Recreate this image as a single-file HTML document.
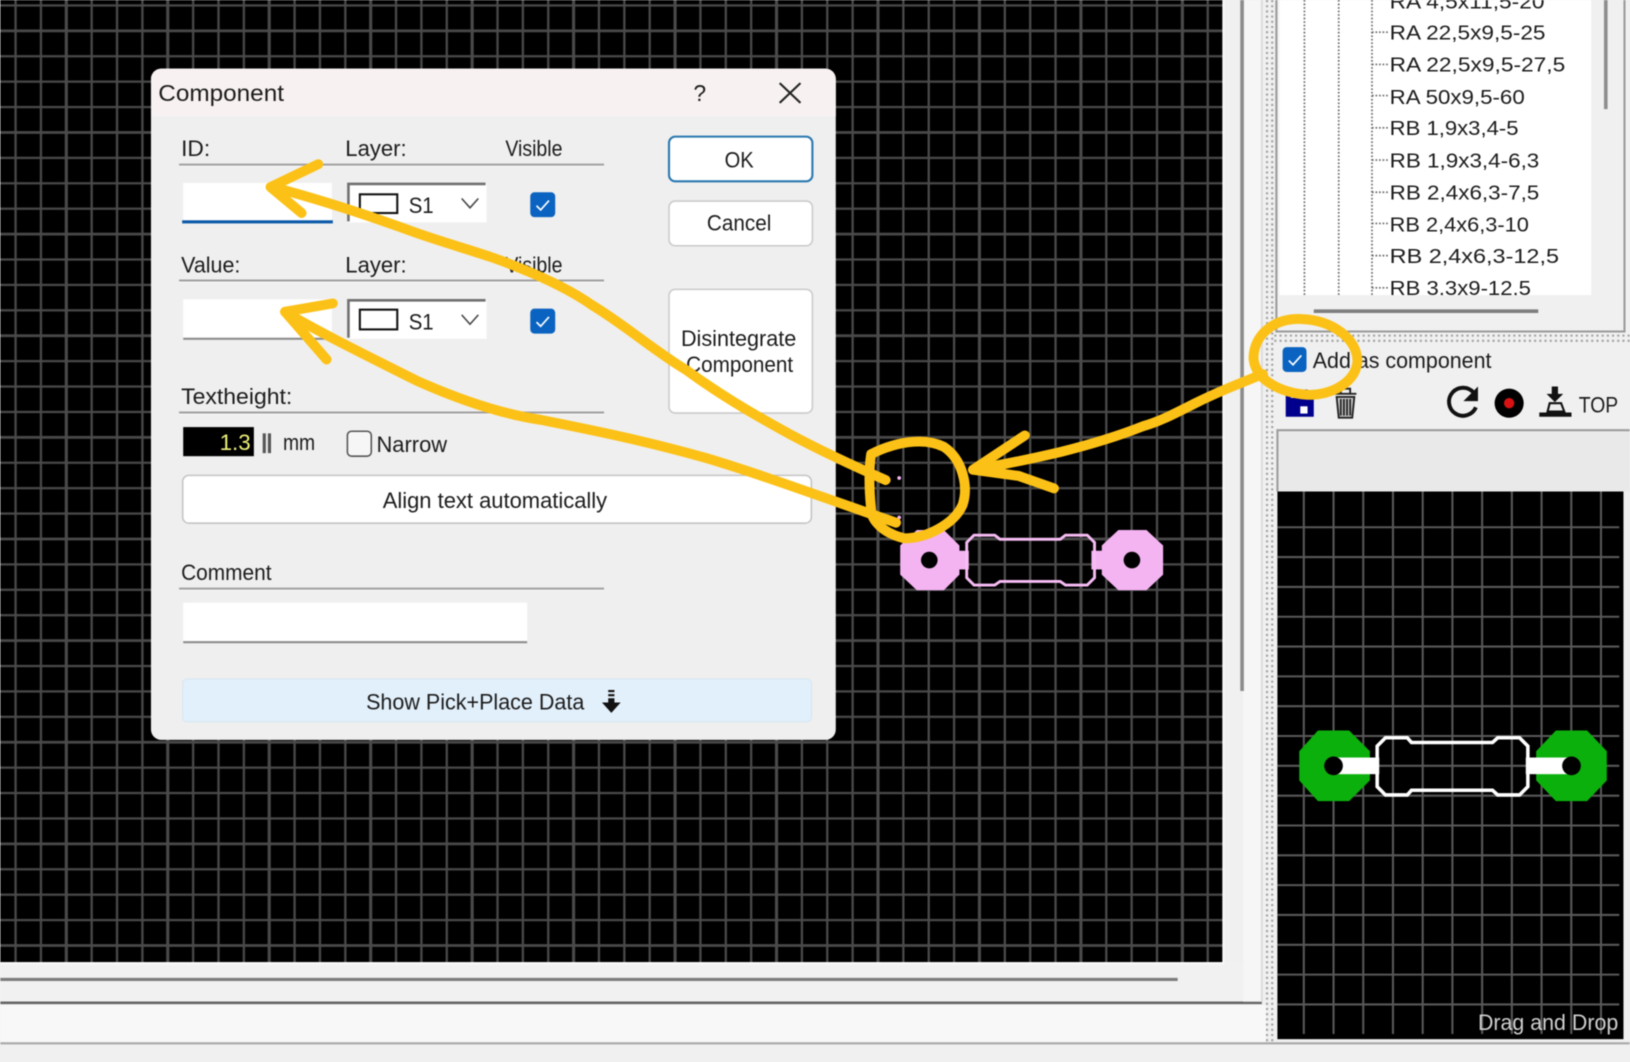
<!DOCTYPE html>
<html><head><meta charset="utf-8"><title>Component</title>
<style>
html,body{margin:0;padding:0;width:1630px;height:1062px;overflow:hidden;background:#f0f0f0}
svg{display:block;filter:blur(.55px)}
text{font-family:"Liberation Sans",sans-serif;font-size:21px;fill:#1c1c1c}
</style></head><body>
<svg width="1630" height="1062" viewBox="0 0 1568 1022" xmlns="http://www.w3.org/2000/svg">
<defs>
<pattern id="g" patternUnits="userSpaceOnUse" x="-46.14" y="-80.1" width="97.64" height="97.8">
<rect width="97.64" height="97.8" fill="#000"/>
<g stroke="#4a4a4a" fill="none">
<path d="M12 0V97.8" stroke-width="3"/><path d="M36.41 0V97.8M60.82 0V97.8M85.23 0V97.8" stroke-width="2.2"/>
<path d="M0 12H97.64" stroke-width="2.6"/><path d="M0 36.45H97.64M0 60.9H97.64M0 85.35H97.64" stroke-width="2.2"/>
</g></pattern>
<clipPath id="lc"><rect x="1231" y="0" width="300" height="284"/></clipPath>
</defs>

<rect width="1568" height="1022" fill="#f0f0f0"/>
<!-- main canvas -->
<rect x="0" y="0" width="1177" height="926" fill="url(#g)"/>
<rect x="0" y="926" width="1214" height="38" fill="#f1f1f1"/>
<path d="M0 927H1177V0" stroke="#fafafa" stroke-width="2" fill="none"/>
<path d="M0 942.5H1133" stroke="#7c7c7c" stroke-width="3"/>
<path d="M0 965H1214" stroke="#666" stroke-width="2.5"/>
<rect x="0" y="967" width="1218" height="36" fill="#f8f8f8"/>
<path d="M0 1004H1568" stroke="#a8a8a8" stroke-width="2"/>
<rect x="1196" y="0" width="18" height="964" fill="#f6f6f6"/>
<path d="M1195 0V665" stroke="#8c8c8c" stroke-width="3.5"/>
<path d="M1214 0V964" stroke="#dcdcdc" stroke-width="2"/>

<!-- dotted strips -->
<path d="M1219 0V1003M1224 0V1003" stroke="#a0a0a0" stroke-width="2" stroke-dasharray="2 3"/>
<path d="M1226 323H1568M1226 328H1568" stroke="#a0a0a0" stroke-width="2" stroke-dasharray="2 3"/>

<!-- list -->
<path d="M1228 0V319H1563V0" fill="none" stroke="#9a9a9a" stroke-width="2"/>
<rect x="1231" y="0" width="300" height="284" fill="#fff"/>
<path d="M1545 0V105" stroke="#8e8e8e" stroke-width="3.5"/>
<path d="M1264 299.500H1480" stroke="#7e7e7e" stroke-width="3.5"/>
<g stroke="#666" stroke-width="1.600" stroke-dasharray="1.600 1.800" fill="none">
<path d="M1255 0V284M1288 0V284M1320 0V284"/>
<path d="M1320 31H1336M1320 62H1336M1320 92H1336M1320 123H1336M1320 154H1336M1320 185H1336M1320 215H1336M1320 246H1336M1320 277H1336"/>
</g>
<g clip-path="url(#lc)">
<text x="1337" y="8" textLength="149" lengthAdjust="spacingAndGlyphs" style="font-size:20px">RA 4,5x11,5-20</text>
<text x="1337" y="38" textLength="150" lengthAdjust="spacingAndGlyphs" style="font-size:20px">RA 22,5x9,5-25</text>
<text x="1337" y="69" textLength="169" lengthAdjust="spacingAndGlyphs" style="font-size:20px">RA 22,5x9,5-27,5</text>
<text x="1337" y="100" textLength="130" lengthAdjust="spacingAndGlyphs" style="font-size:20px">RA 50x9,5-60</text>
<text x="1337" y="130" textLength="124" lengthAdjust="spacingAndGlyphs" style="font-size:20px">RB 1,9x3,4-5</text>
<text x="1337" y="161" textLength="144" lengthAdjust="spacingAndGlyphs" style="font-size:20px">RB 1,9x3,4-6,3</text>
<text x="1337" y="192" textLength="144" lengthAdjust="spacingAndGlyphs" style="font-size:20px">RB 2,4x6,3-7,5</text>
<text x="1337" y="223" textLength="134" lengthAdjust="spacingAndGlyphs" style="font-size:20px">RB 2,4x6,3-10</text>
<text x="1337" y="253" textLength="163" lengthAdjust="spacingAndGlyphs" style="font-size:20px">RB 2,4x6,3-12,5</text>
<text x="1337" y="284" textLength="136" lengthAdjust="spacingAndGlyphs" style="font-size:20px">RB 3,3x9-12,5</text>
</g>

<!-- add as component -->
<rect x="1234" y="334" width="23" height="24" rx="4" fill="#0a63c0"/>
<path d="M1240 347l4 4 8-9" fill="none" stroke="#fff" stroke-width="1.600"/>
<text x="1263" y="354" textLength="172" lengthAdjust="spacingAndGlyphs">Add as component</text>

<!-- toolbar icons -->
<path d="M1237 375H1258L1264 381V401H1237Z" fill="#00008c"/>
<rect x="1242" y="375" width="13" height="8" fill="#dfe3f5"/>
<rect x="1251" y="391" width="7" height="7" fill="#fff"/>
<g fill="none" stroke="#222" stroke-width="1.800">
<path d="M1284 379H1305M1290 379V374H1299V379"/>
<path d="M1286 382H1303L1301 402H1288Z" fill="#ccc"/>
<path d="M1290 384V400M1293 384V400M1296 384V400M1299 384V400" stroke-width="1.800"/>
</g>
<path d="M1418 378A13.500 13.500 0 1 0 1420 392" fill="none" stroke="#111" stroke-width="3.800"/>
<path d="M1422 372V386H1408Z" fill="#111"/>
<circle cx="1452" cy="388" r="14" fill="#000"/><circle cx="1452" cy="388" r="5" fill="#d81212"/>
<path d="M1481 397H1512V401H1481Z" fill="#111"/>
<path d="M1489 396L1491 388H1502L1505 396Z" fill="#eee" stroke="#111" stroke-width="2"/>
<path d="M1493 372H1499V379H1504L1496 387L1488 379H1493Z" fill="#111"/>
<text x="1519" y="397" textLength="38" lengthAdjust="spacingAndGlyphs">TOP</text>

<!-- preview -->
<rect x="1229" y="414" width="339" height="59" fill="#e9e9e9"/>
<path d="M1229 473V414H1568" fill="none" stroke="#9c9c9c" stroke-width="2"/>
<rect x="1229" y="473" width="333" height="527" fill="#000"/>
<g stroke="#585858" stroke-width="2">
<path d="M1254.400 473V995M1283 473V995M1311.600 473V995M1340.200 473V995M1368.800 473V995M1397.400 473V995M1426 473V995M1454.600 473V995M1483.200 473V995M1511.800 473V995M1540.400 473V995"/>
<path d="M1229 507.400H1558M1229 536.100H1558M1229 564.800H1558M1229 593.500H1558M1229 622.200H1558M1229 650.900H1558M1229 679.600H1558M1229 708.300H1558M1229 737H1558M1229 765.700H1558M1229 794.400H1558M1229 823.100H1558M1229 851.800H1558M1229 880.500H1558M1229 909.200H1558M1229 937.900H1558M1229 966.600H1558"/>
</g>
<path d="M1268 703H1298L1318 723V751L1298 771H1268L1250 751V723Z" fill="#0cb00c"/>
<path d="M1497 703H1527L1546 723V751L1527 771H1497L1478 751V723Z" fill="#0cb00c"/>
<rect x="1285" y="729" width="42" height="16" fill="#fff"/><rect x="1468" y="729" width="42" height="16" fill="#fff"/>
<circle cx="1283" cy="737" r="9" fill="#000"/><circle cx="1512" cy="737" r="9" fill="#000"/>
<path d="M1333 710H1354L1358 714.500H1436L1441 710H1462L1470 718V757L1462 765H1441L1436 760.500H1358L1354 765H1333L1325 757V718Z" fill="none" stroke="#fff" stroke-width="3.4"/>
<text x="1422" y="991" textLength="135" lengthAdjust="spacingAndGlyphs" style="fill:#cfcfcf;font-size:21px">Drag and Drop</text>

<!-- pink component -->
<path d="M882 510H908L923 525V553L908 568H882L866 553V525Z" fill="#f4b4f2"/>
<path d="M1076 510H1103L1119 525V553L1103 568H1076L1060 553V525Z" fill="#f4b4f2"/>
<rect x="920" y="530" width="12" height="18" fill="#f4b4f2"/><rect x="1050" y="530" width="12" height="18" fill="#f4b4f2"/>
<circle cx="894" cy="539" r="8" fill="#000"/><circle cx="1089" cy="539" r="8" fill="#000"/>
<path d="M937 515H957L962 519H1020L1025 515H1046L1053 522V556L1046 563H1025L1020 559.500H962L957 563H937L930 556V522Z" fill="none" stroke="#f6bcf4" stroke-width="2.8"/>
<circle cx="865" cy="460" r="1.800" fill="#f4b4f2"/><circle cx="865" cy="498" r="1.800" fill="#f4b4f2"/>

<!-- dialog -->
<rect x="145" y="66" width="659" height="646" rx="10" fill="#efefef"/>
<path d="M145 112V76a10 10 0 0 1 10-10H794a10 10 0 0 1 10 10V112Z" fill="#f8f1f1"/>
<text x="152" y="97" textLength="121" lengthAdjust="spacingAndGlyphs" style="font-size:22px">Component</text>
<text x="667" y="97" style="font-size:22px">?</text>
<path d="M750 80L770 99M770 80L750 99" stroke="#222" stroke-width="2" fill="none"/>

<g stroke="#a0a0a0" stroke-width="2">
<path d="M172 158.500H581M172 270H581M172 397H581M172 566.500H581"/>
</g>
<path d="M172 160H581M172 271.500H581M172 398.500H581M172 568H581" stroke="#fafafa" stroke-width="1"/>

<text x="174" y="150" textLength="28" lengthAdjust="spacingAndGlyphs">ID:</text>
<text x="332" y="150" textLength="59" lengthAdjust="spacingAndGlyphs">Layer:</text>
<text x="486" y="150" textLength="55" lengthAdjust="spacingAndGlyphs">Visible</text>
<rect x="176" y="176" width="143" height="38" fill="#fff"/>
<rect x="175" y="212" width="145" height="3" fill="#0a5aa8"/>
<rect x="334" y="176" width="134" height="38" fill="#fff"/>
<path d="M335 213V177H467" fill="none" stroke="#707070" stroke-width="2.500"/>
<rect x="346" y="187" width="36" height="18" fill="#fff" stroke="#111" stroke-width="2"/>
<text x="393" y="205" textLength="24" lengthAdjust="spacingAndGlyphs">S1</text>
<path d="M444 191L452 200L460 191" fill="none" stroke="#444" stroke-width="1.500"/>
<rect x="510" y="185" width="24" height="24" rx="4" fill="#0a63c0"/>
<path d="M516 198l4 4 8-9" fill="none" stroke="#fff" stroke-width="1.600"/>

<text x="174" y="262" textLength="57" lengthAdjust="spacingAndGlyphs">Value:</text>
<text x="332" y="262" textLength="59" lengthAdjust="spacingAndGlyphs">Layer:</text>
<text x="486" y="262" textLength="55" lengthAdjust="spacingAndGlyphs">Visible</text>
<rect x="176" y="288" width="143" height="38" fill="#fff"/>
<rect x="176" y="325" width="143" height="2" fill="#8a8a8a"/>
<rect x="334" y="288" width="134" height="38" fill="#fff"/>
<path d="M335 325V289H467" fill="none" stroke="#707070" stroke-width="2.500"/>
<rect x="346" y="298" width="36" height="19" fill="#fff" stroke="#111" stroke-width="2"/>
<text x="393" y="317" textLength="24" lengthAdjust="spacingAndGlyphs">S1</text>
<path d="M444 303L452 312L460 303" fill="none" stroke="#444" stroke-width="1.500"/>
<rect x="510" y="297" width="24" height="24" rx="4" fill="#0a63c0"/>
<path d="M516 310l4 4 8-9" fill="none" stroke="#fff" stroke-width="1.600"/>

<text x="174" y="389" textLength="107" lengthAdjust="spacingAndGlyphs">Textheight:</text>
<rect x="176" y="411" width="68" height="28" fill="#000"/>
<text x="211" y="433" textLength="30" lengthAdjust="spacingAndGlyphs" style="fill:#eef07a">1.3</text>
<path d="M254 417V436M259 417V436" stroke="#555" stroke-width="3"/>
<text x="272" y="433" textLength="31" lengthAdjust="spacingAndGlyphs">mm</text>
<rect x="334" y="415" width="23" height="24" rx="4" fill="#f6f6f6" stroke="#555" stroke-width="1.500"/>
<text x="362" y="435" textLength="68" lengthAdjust="spacingAndGlyphs">Narrow</text>

<rect x="175.500" y="457.500" width="605" height="46" rx="6" fill="#fff" stroke="#c4c4c4" stroke-width="1.500"/>
<text x="368" y="489" textLength="216" lengthAdjust="spacingAndGlyphs">Align text automatically</text>

<text x="174" y="558" textLength="87" lengthAdjust="spacingAndGlyphs">Comment</text>
<rect x="176" y="580" width="331" height="39" fill="#fff"/>
<rect x="176" y="617" width="331" height="2" fill="#8a8a8a"/>

<rect x="175.500" y="653.500" width="605" height="41" rx="4" fill="#e2f0fb" stroke="#d6e6f2"/>
<text x="352" y="683" textLength="210" lengthAdjust="spacingAndGlyphs">Show Pick+Place Data</text>
<path d="M585 664H591V666H585ZM585 668H591V670H585ZM585 672H591V676H597L588 686L579 676H585Z" fill="#111"/>

<rect x="643.500" y="131.500" width="138" height="43" rx="6" fill="#fff" stroke="#2a78b0" stroke-width="2"/>
<text x="697" y="161" textLength="28" lengthAdjust="spacingAndGlyphs">OK</text>
<rect x="643.500" y="193.500" width="138" height="43" rx="6" fill="#fff" stroke="#cacaca" stroke-width="1.500"/>
<text x="680" y="222" textLength="62" lengthAdjust="spacingAndGlyphs">Cancel</text>
<rect x="643.500" y="278.500" width="138" height="119" rx="6" fill="#fff" stroke="#cacaca" stroke-width="1.500"/>
<text x="655" y="333" textLength="111" lengthAdjust="spacingAndGlyphs">Disintegrate</text>
<text x="660" y="358" textLength="103" lengthAdjust="spacingAndGlyphs">Component</text>

<!-- yellow annotations -->
<g fill="none" stroke="#fcc116" stroke-width="9.500" stroke-linecap="round" stroke-linejoin="round">
<path d="M262 180C300 190 340 202 400 224C440 238 470 245 500 258C525 268 550 280 570 294C600 312 630 338 660 356C690 378 720 396 760 418C790 434 820 448 852 462"/>
<path d="M306 158L260 180L290 205"/>
<path d="M274 300C300 316 340 336 400 366C440 384 480 398 520 404C570 414 620 424 680 441C730 456 790 478 862 503"/>
<path d="M320 292L274 300L314 346"/>
<path d="M838 437C860 426 888 420 908 430C926 442 932 468 926 486C918 504 892 518 870 518C852 514 838 502 838 490C836 470 836 450 838 437Z"/>
<path d="M1215 360C1190 370 1170 378 1150 388C1130 398 1115 406 1100 410C1070 422 1040 430 1020 435C990 442 960 448 936 452"/>
<path d="M986 419L936 452L980 458L1014 470"/>
<path d="M1206 345C1206 322 1226 306 1252 307C1282 308 1306 326 1306 348C1304 368 1282 380 1258 380C1232 378 1208 366 1206 345Z"/>
</g>
</svg>
</body></html>
